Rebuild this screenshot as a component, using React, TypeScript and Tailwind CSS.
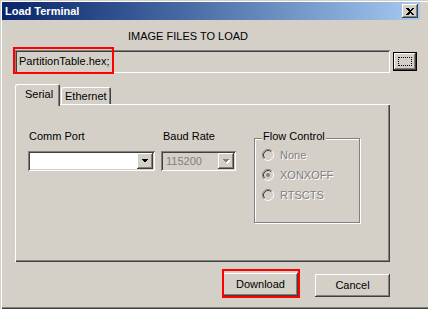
import React from "react";

// Win2000 classic bevels
const raised =
	"shadow-[inset_-1px_-1px_0_#404040,inset_1px_1px_0_#ffffff,inset_-2px_-2px_0_#808080,inset_2px_2px_0_#d4d0c8]";
const sunken =
	"shadow-[inset_1px_1px_0_#808080,inset_-1px_-1px_0_#ffffff,inset_2px_2px_0_#404040,inset_-2px_-2px_0_#d4d0c8]";

function DropArrow({ disabled }: { disabled?: boolean }) {
	return (
		<svg width="8" height="5" viewBox="0 0 8 5" shapeRendering="crispEdges">
			{disabled && <path d="M2 1h7L5.5 5z" fill="#ffffff" />}
			<path d="M0.5 0h7L4 4z" fill={disabled ? "#808080" : "#000000"} />
		</svg>
	);
}

function Combo({
	value,
	disabled,
	width,
}: {
	value?: string;
	disabled?: boolean;
	width: string;
}) {
	return (
		<div
			className={`${width} h-[20px] flex items-stretch p-[2px] ${sunken} ${
				disabled ? "bg-[#d4d0c8]" : "bg-white"
			}`}
		>
			<div
				className={`flex-1 flex items-center pl-[3px] ${
					disabled ? "text-[#808080]" : "text-black"
				}`}
			>
				{value}
			</div>
			<div
				className={`w-[16px] flex items-center justify-center bg-[#d4d0c8] ${raised}`}
			>
				<DropArrow disabled={disabled} />
			</div>
		</div>
	);
}

function Radio({ label, checked }: { label: string; checked?: boolean }) {
	return (
		<div className="h-[20px] flex items-center gap-[6px]">
			<svg width="12" height="12" viewBox="0 0 12 12">
				<circle cx="6" cy="6" r="4.2" fill="#d4d0c8" />
				<path d="M2.11 9.89A5.5 5.5 0 0 1 9.89 2.11" fill="none" stroke="#808080" />
				<path d="M9.89 2.11A5.5 5.5 0 0 1 2.11 9.89" fill="none" stroke="#ffffff" />
				<path d="M2.82 9.18A4.5 4.5 0 0 1 9.18 2.82" fill="none" stroke="#404040" />
				<path d="M9.18 2.82A4.5 4.5 0 0 1 2.82 9.18" fill="none" stroke="#d4d0c8" />
				{checked && <circle cx="6" cy="6" r="2" fill="#808080" />}
			</svg>
			<span className="text-[#808080] [text-shadow:1px_1px_0_#ffffff]">
				{label}
			</span>
		</div>
	);
}

export default function App() {
	return (
		<div className="w-[428px] h-[309px] bg-[#d4d0c8] overflow-hidden font-['Liberation_Sans',Arial,sans-serif] text-[11px] leading-[13px] text-black">
			<div className="w-[428px] h-[309px] pt-[2px] pl-[2px] shadow-[inset_1px_1px_0_#d4d0c8,inset_2px_2px_0_#ffffff,inset_0_-1px_0_#404040,inset_0_-2px_0_#808080]">
				{/* Title bar */}
				<div className="w-[418px] h-[18px] flex items-center justify-between pl-[3px] pr-[2px] bg-linear-to-r from-[#0a246a] to-[#a6caf0]">
					<span className="text-white font-bold">Load Terminal</span>
					<div
						className={`w-[16px] h-[14px] flex items-center justify-center bg-[#d4d0c8] ${raised}`}
					>
						<svg width="8" height="7" viewBox="0 0 8 7" shapeRendering="crispEdges">
							<path
								d="M0 0h2l2 2 2-2h2v1L5 3.5 8 6v1H6L4 5 2 7H0V6l3-2.5L0 1z"
								fill="#000000"
							/>
						</svg>
					</div>
				</div>

				{/* Body */}
				<div className="pl-[13px]">
					<div className="mt-[10px] ml-[113px]">IMAGE FILES TO LOAD</div>

					<div className="mt-[7px] flex items-center">
						<div className="relative">
							<div
								className={`w-[375px] h-[23px] flex items-center pl-[4px] bg-[#d4d0c8] ${sunken}`}
							>
								PartitionTable.hex;
							</div>
							<div className="absolute -left-[2px] -top-[3px] w-[101px] h-[27px] border-2 border-[#ff0000]" />
						</div>
						<div className="ml-[3px] w-[24px] h-[19px] border border-black bg-[#d4d0c8] shadow-[inset_-1px_-1px_0_#404040,inset_1px_1px_0_#ffffff,inset_-2px_-2px_0_#808080] p-[4px]">
							<div className="w-full h-full border border-dotted border-black" />
						</div>
					</div>

					{/* Tabs */}
					<div className="mt-[11px] w-[375px]">
						<div className="h-[20px] flex items-end">
							<div className="relative z-10 w-[45px] h-[22px] -mb-[2px] pl-[10px] pt-[4px] bg-[#d4d0c8] rounded-t-[2px] shadow-[inset_1px_1px_0_#ffffff,inset_-1px_0_0_#404040,inset_-2px_0_0_#808080]">
								Serial
							</div>
							<div className="ml-[1px] w-[50px] h-[17px] pl-[4px] pt-[3px] bg-[#d4d0c8] rounded-t-[2px] shadow-[inset_1px_1px_0_#ffffff,inset_-1px_0_0_#404040,inset_-2px_0_0_#808080]">
								Ethernet
							</div>
						</div>
						<div className="h-[158px] pt-[26px] pl-[13px] flex items-start shadow-[inset_1px_1px_0_#ffffff,inset_-1px_-1px_0_#404040,inset_-2px_-2px_0_#808080]">
							<div className="w-[127px]">
								<div className="pl-[1px]">Comm Port</div>
								<div className="mt-[8px]">
									<Combo width="w-[127px]" />
								</div>
							</div>
							<div className="ml-[6px] w-[75px]">
								<div className="pl-[2px]">Baud Rate</div>
								<div className="mt-[8px]">
									<Combo width="w-[75px]" value="115200" disabled />
								</div>
							</div>
							<div className="ml-[18px] mt-[8px] relative w-[106px] h-[85px] border border-[#808080] shadow-[inset_1px_1px_0_#ffffff,1px_1px_0_#ffffff] pt-[6px] pl-[7px]">
								<span className="absolute -top-[9px] left-[7px] px-[1px] bg-[#d4d0c8]">
									Flow Control
								</span>
								<Radio label="None" />
								<Radio label="XONXOFF" checked />
								<Radio label="RTSCTS" />
							</div>
						</div>
					</div>

					{/* Buttons */}
					<div className="mt-[11px] w-[375px] flex justify-end gap-[17px]">
						<div className="relative">
							<div
								className={`w-[75px] h-[23px] flex items-center justify-center bg-[#d4d0c8] ${raised}`}
							>
								Download
							</div>
							<div className="absolute -left-[1px] -top-[4px] w-[78px] h-[29px] border-2 border-[#ff0000]" />
						</div>
						<div
							className={`mt-[1px] w-[75px] h-[23px] flex items-center justify-center bg-[#d4d0c8] ${raised}`}
						>
							Cancel
						</div>
					</div>
				</div>
			</div>
		</div>
	);
}
